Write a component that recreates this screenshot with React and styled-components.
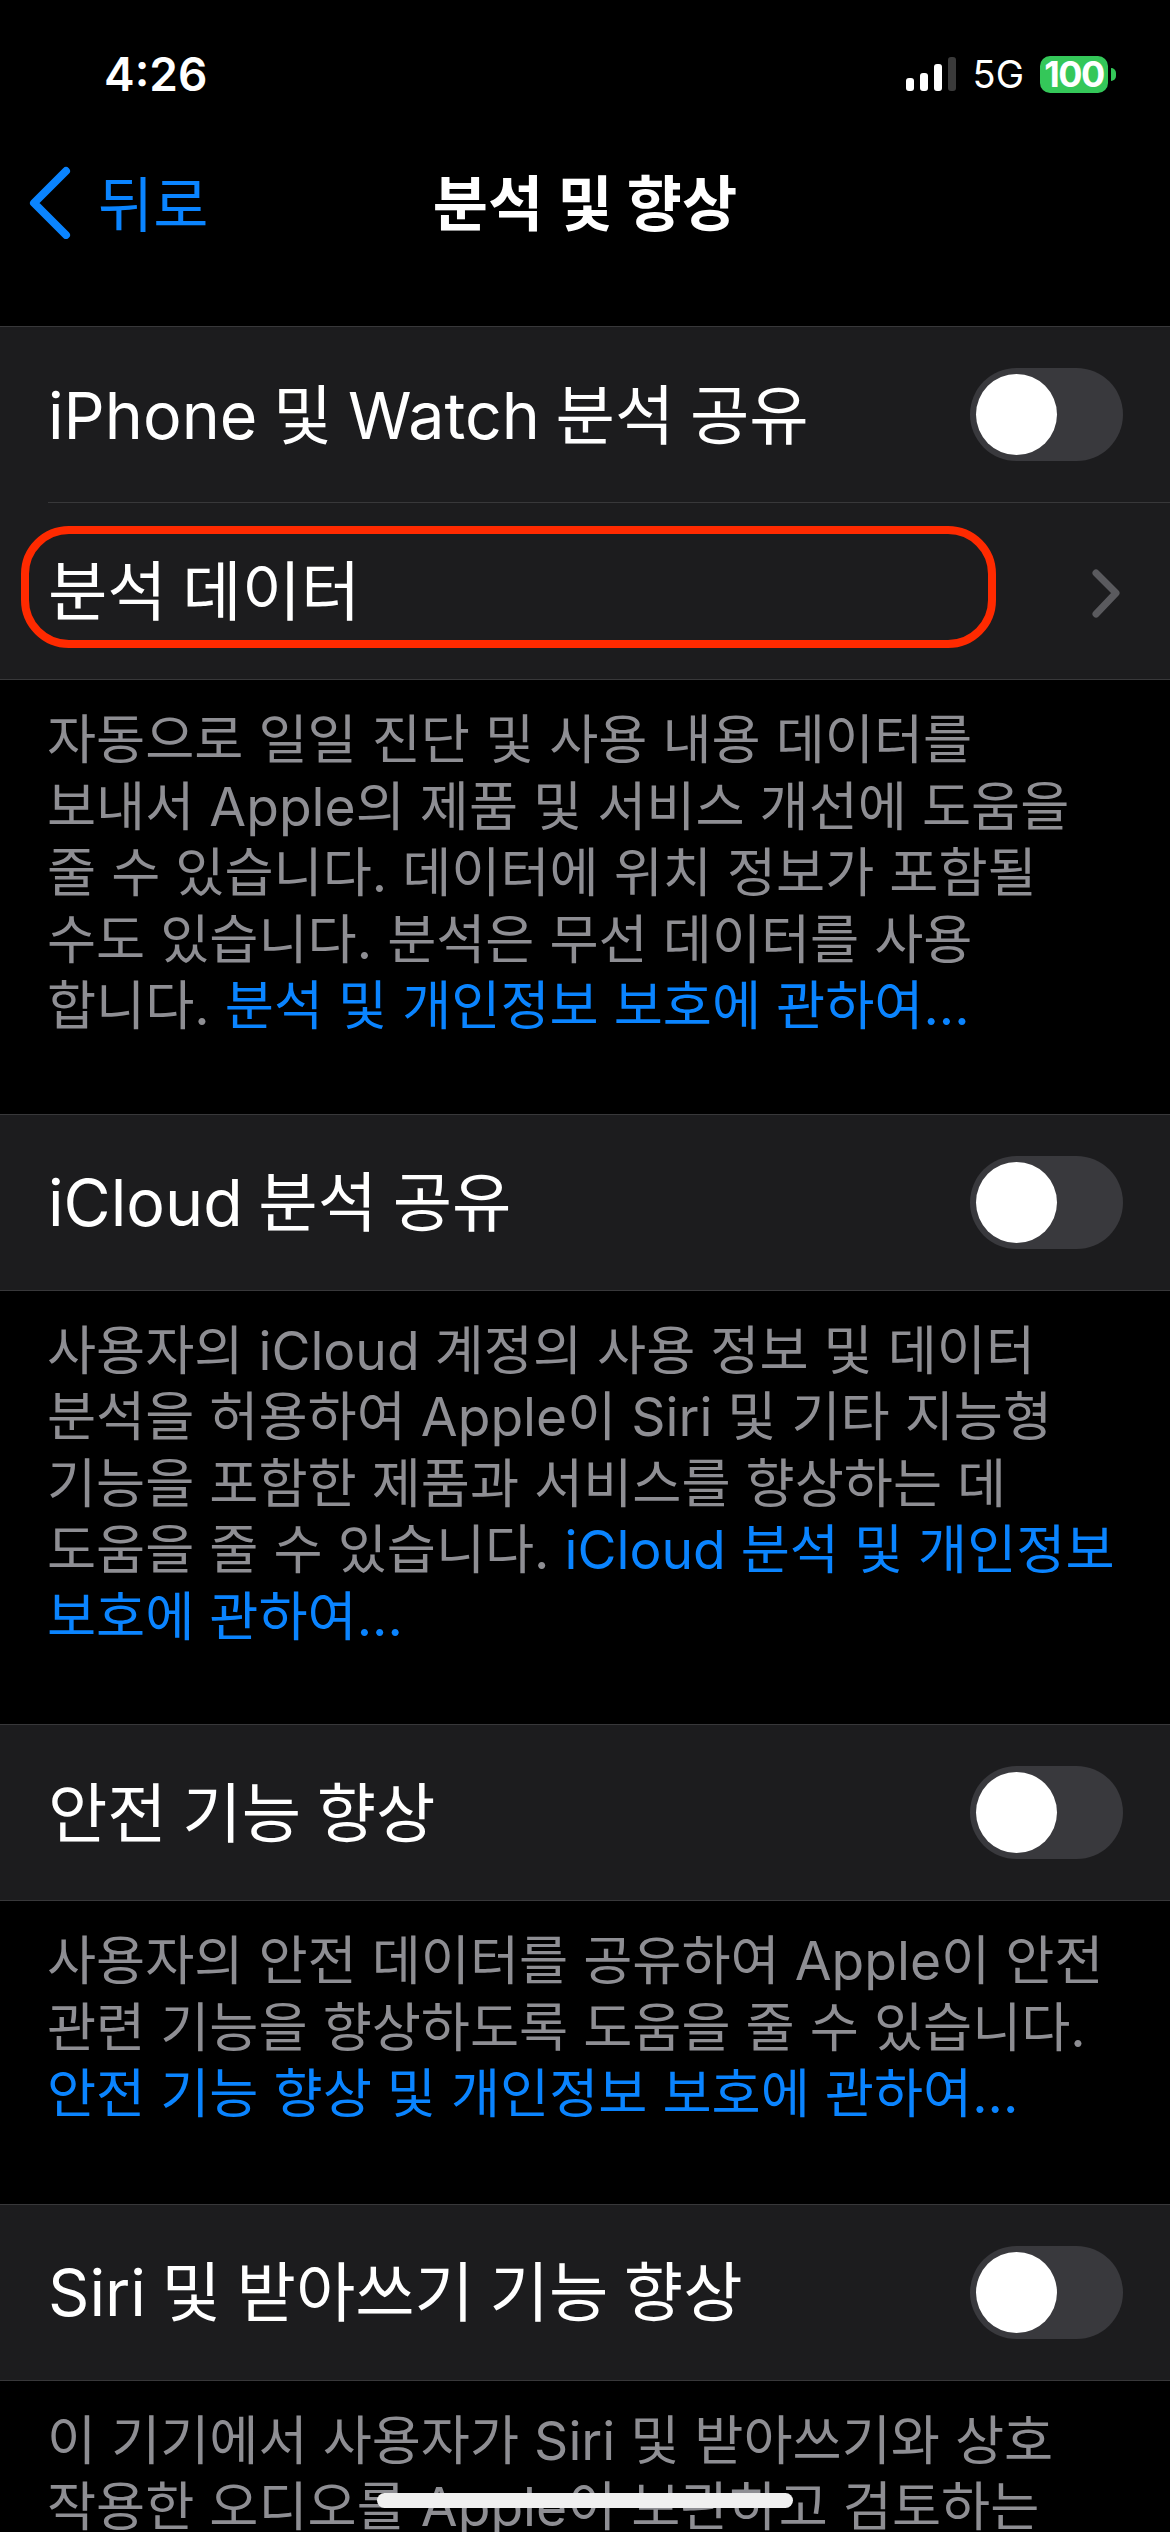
import React from 'react';
import styled, { createGlobalStyle } from 'styled-components';

const sans = `Inter, "Noto Sans CJK KR", "Noto Sans", sans-serif`;

const GlobalStyle = createGlobalStyle`
    html, body {
        margin: 0;
        padding: 0;
        background: #000;
    }
    * {
        box-sizing: border-box;
    }
`;

const Screen = styled.div`
    position: relative;
    width: 1170px;
    height: 2532px;
    overflow: hidden;
    background: #000;
    font-family: ${sans};
    color: #fff;
`;

const StatusBar = styled.div`
    height: 148px;
    padding: 0 53px 0 104px;
    display: flex;
    align-items: center;
    justify-content: space-between;
`;

const Time = styled.div`
    font-size: 46px;
    font-weight: 600;
`;

const StatusRight = styled.div`
    display: flex;
    align-items: center;
`;

const Signal = styled.div`
    display: flex;
    align-items: flex-end;
    gap: 6px;
    height: 34px;
    margin-right: 17px;
`;

const Bar = styled.span`
    width: 8px;
    height: ${p => p.$h}px;
    border-radius: 3px;
    background: ${p => (p.$dim ? '#3a3a3a' : '#fff')};
`;

const Network = styled.div`
    font-size: 38px;
    font-weight: 400;
    margin-right: 16px;
`;

const Battery = styled.div`
    position: relative;
    width: 68px;
    height: 37px;
    margin-right: 9px;
    border-radius: 10px;
    background: #34c759;
    display: flex;
    align-items: center;
    justify-content: center;
    font-size: 36px;
    font-weight: 700;
    letter-spacing: -1.5px;
    &::after {
        content: '';
        position: absolute;
        left: 71px;
        top: 12px;
        width: 5px;
        height: 13px;
        border-radius: 0 6px 6px 0;
        background: #34c759;
    }
`;

const NavBar = styled.div`
    height: 104px;
    margin-bottom: 74px;
    padding: 0 28px;
    display: grid;
    grid-template-columns: 1fr auto 1fr;
    align-items: center;
`;

const BackLink = styled.div`
    display: flex;
    align-items: center;
    gap: 26px;
    color: #0a84ff;
    font-size: 60px;
`;

const Title = styled.div`
    font-size: 60px;
    font-weight: 700;
    padding-bottom: 2px;
`;

const Section = styled.div`
    background: #1c1c1e;
    border-top: 1px solid #38383a;
    border-bottom: 1px solid #38383a;
`;

const Row = styled.div`
    position: relative;
    height: 175px;
    padding: 0 47px 0 48px;
    display: flex;
    align-items: center;
    justify-content: space-between;
    font-size: 64.5px;
    word-spacing: -2.5px;
    & + & {
        height: 177px;
        &::before {
            content: '';
            position: absolute;
            top: 0;
            left: 48px;
            right: 0;
            height: 1px;
            background: #38383a;
        }
    }
`;

const RowLabel = styled.span`
    padding-bottom: 8px;
`;

const Toggle = styled.div`
    width: 153px;
    height: 93px;
    padding: 6px;
    border-radius: 47px;
    background: #39393d;
    &::before {
        content: '';
        display: block;
        width: 81px;
        height: 81px;
        border-radius: 50%;
        background: #fff;
    }
`;

const Highlight = styled.div`
    position: absolute;
    left: 21px;
    top: 24px;
    width: 975px;
    height: 122px;
    border: 8px solid #ff2a00;
    border-radius: 48px;
`;

const Footer = styled.div`
    padding: 27px 30px 0 47px;
    margin-bottom: ${p => p.$gap}px;
    font-size: 53.4px;
    line-height: 66.5px;
    color: #8e8e93;
    white-space: nowrap;
`;

const FooterLink = styled.span`
    color: #0a84ff;
`;

const HomeIndicator = styled.div`
    position: absolute;
    left: 377px;
    top: 2493px;
    width: 416px;
    height: 15px;
    border-radius: 8px;
    background: #f0f0f0;
`;

const BackChevron = () => (
    <svg width="44" height="78" viewBox="0 0 44 78" fill="none">
        <path d="M38 10L6 42l32 32" stroke="#0a84ff" strokeWidth="8" strokeLinecap="round" strokeLinejoin="round" />
    </svg>
);

const RowChevron = () => (
    <svg width="34" height="54" viewBox="0 0 34 54" fill="none">
        <path d="M7 9l20 20L7 50" stroke="#5a5a5e" strokeWidth="7" strokeLinecap="round" strokeLinejoin="round" />
    </svg>
);

const App = () => (
    <Screen>
        <GlobalStyle />
        <StatusBar>
            <Time>4:26</Time>
            <StatusRight>
                <Signal>
                    <Bar $h={13} />
                    <Bar $h={18} />
                    <Bar $h={27} />
                    <Bar $h={34} $dim />
                </Signal>
                <Network>5G</Network>
                <Battery>100</Battery>
            </StatusRight>
        </StatusBar>
        <NavBar>
            <BackLink>
                <BackChevron />
                뒤로
            </BackLink>
            <Title>분석 및 향상</Title>
        </NavBar>

        <Section>
            <Row>
                <RowLabel>iPhone 및 Watch 분석 공유</RowLabel>
                <Toggle />
            </Row>
            <Row>
                <RowLabel>분석 데이터</RowLabel>
                <Highlight />
                <RowChevron />
            </Row>
        </Section>
        <Footer $gap={74}>
            자동으로 일일 진단 및 사용 내용 데이터를<br />
            보내서 Apple의 제품 및 서비스 개선에 도움을<br />
            줄 수 있습니다. 데이터에 위치 정보가 포함될<br />
            수도 있습니다. 분석은 무선 데이터를 사용<br />
            합니다. <FooterLink>분석 및 개인정보 보호에 관하여...</FooterLink>
        </Footer>

        <Section>
            <Row>
                <RowLabel>iCloud 분석 공유</RowLabel>
                <Toggle />
            </Row>
        </Section>
        <Footer $gap={74}>
            사용자의 iCloud 계정의 사용 정보 및 데이터<br />
            분석을 허용하여 Apple이 Siri 및 기타 지능형<br />
            기능을 포함한 제품과 서비스를 향상하는 데<br />
            도움을 줄 수 있습니다. <FooterLink>iCloud 분석 및 개인정보</FooterLink><br />
            <FooterLink>보호에 관하여...</FooterLink>
        </Footer>

        <Section>
            <Row>
                <RowLabel>안전 기능 향상</RowLabel>
                <Toggle />
            </Row>
        </Section>
        <Footer $gap={76}>
            사용자의 안전 데이터를 공유하여 Apple이 안전<br />
            관련 기능을 향상하도록 도움을 줄 수 있습니다.<br />
            <FooterLink>안전 기능 향상 및 개인정보 보호에 관하여...</FooterLink>
        </Footer>

        <Section>
            <Row>
                <RowLabel>Siri 및 받아쓰기 기능 향상</RowLabel>
                <Toggle />
            </Row>
        </Section>
        <Footer $gap={0}>
            이 기기에서 사용자가 Siri 및 받아쓰기와 상호<br />
            작용한 오디오를 Apple이 보관하고 검토하는
        </Footer>
        <HomeIndicator />
    </Screen>
);

export default App;
